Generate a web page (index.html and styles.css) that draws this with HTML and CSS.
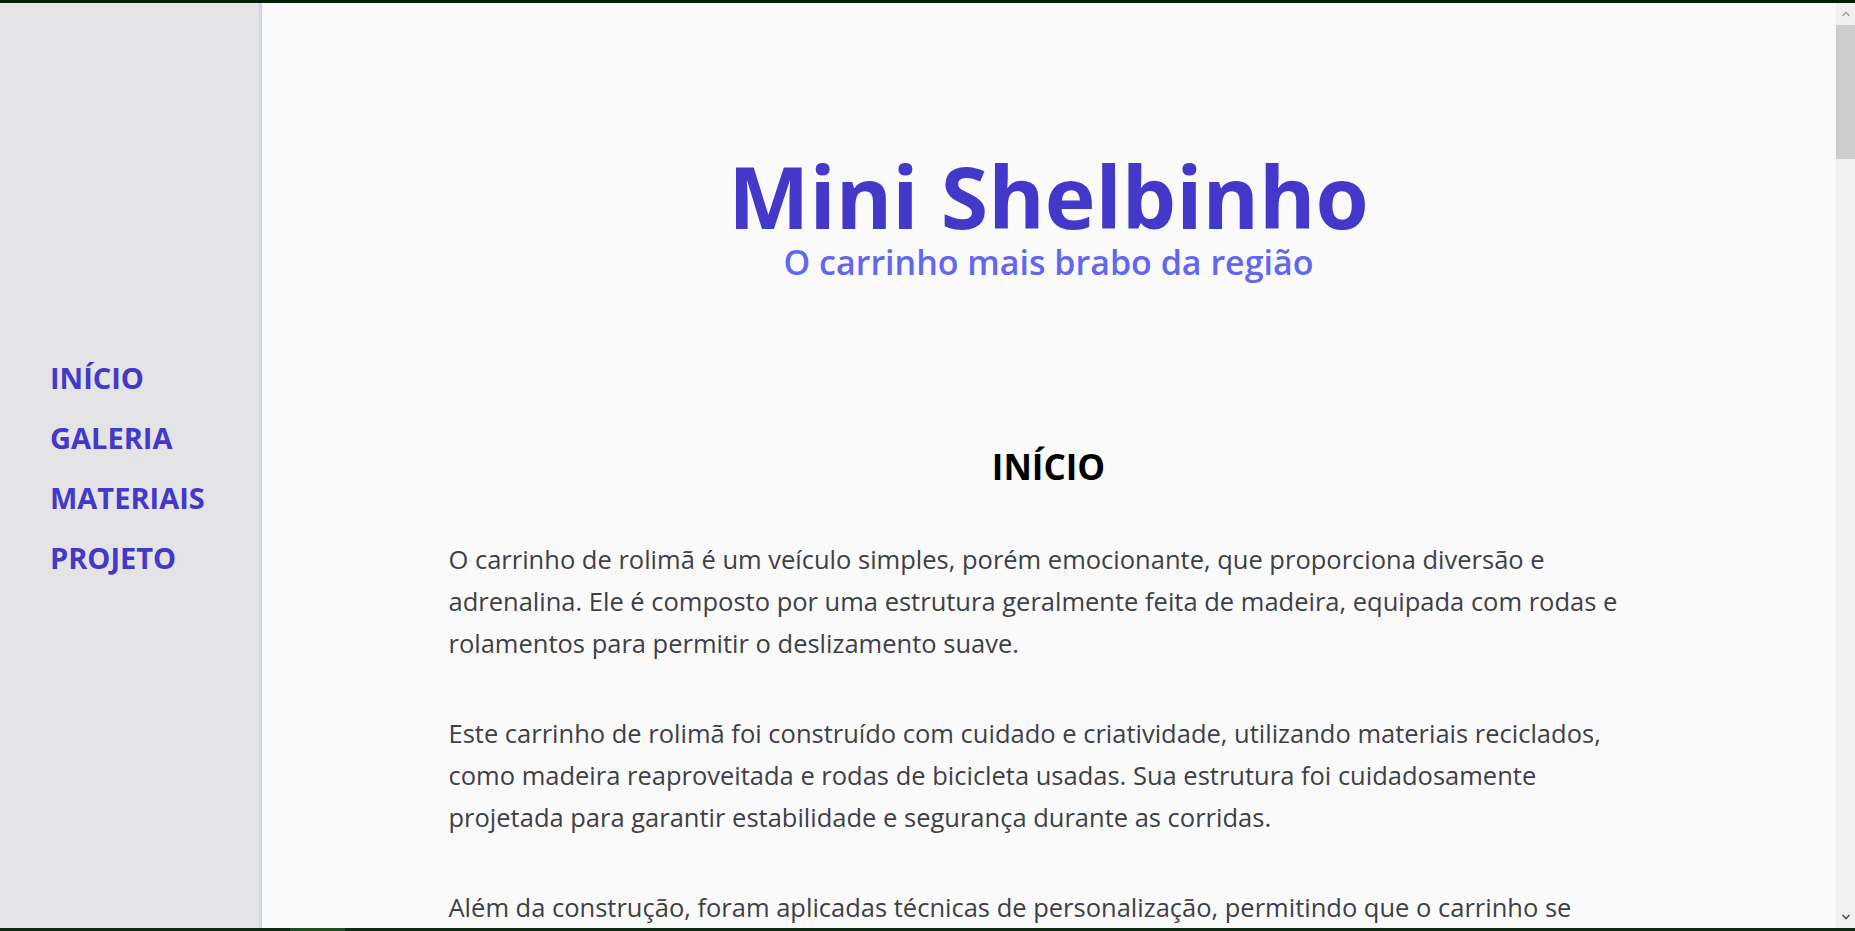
FILE: index.html
```html
<!DOCTYPE html>
<html lang="pt-BR">
<head>
<meta charset="utf-8">
<title>Mini Shelbinho</title>
<link rel="stylesheet" href="styles.css">
</head>
<body>
<div class="topbar"></div>
<div class="app">
  <aside class="sidebar">
    <nav class="nav">
      <a class="nav-link" href="#inicio">INÍCIO</a>
      <a class="nav-link" href="#galeria">GALERIA</a>
      <a class="nav-link" href="#materiais">MATERIAIS</a>
      <a class="nav-link" href="#projeto">PROJETO</a>
    </nav>
  </aside>
  <main class="content">
    <header class="hero">
      <h1 class="hero-title">Mini Shelbinho</h1>
      <p class="hero-subtitle">O carrinho mais brabo da região</p>
    </header>
    <section class="section" id="inicio">
      <h2 class="section-title">INÍCIO</h2>
      <p class="section-text">O carrinho de rolimã é um veículo simples, porém emocionante, que proporciona diversão e adrenalina. Ele é composto por uma estrutura geralmente feita de madeira, equipada com rodas e rolamentos para permitir o deslizamento suave.</p>
      <p class="section-text">Este carrinho de rolimã foi construído com cuidado e criatividade, utilizando materiais reciclados, como madeira reaproveitada e rodas de bicicleta usadas. Sua estrutura foi cuidadosamente projetada para garantir estabilidade e segurança durante as corridas.</p>
      <p class="section-text">Além da construção, foram aplicadas técnicas de personalização, permitindo que o carrinho se destacasse com cores e detalhes únicos, tornando-o ainda mais especial.</p>
    </section>
  </main>
  <div class="scrollbar">
    <div class="sb-btn">
      <svg width="10" height="8" viewBox="0 0 10 8"><path d="M1.5 6 L5 2.5 L8.5 6" fill="none" stroke="#a3a3a3" stroke-width="1.6"/></svg>
    </div>
    <div class="sb-thumb"></div>
    <div class="sb-track"></div>
    <div class="sb-btn">
      <svg width="10" height="8" viewBox="0 0 10 8"><path d="M1.5 2 L5 5.5 L8.5 2" fill="none" stroke="#505050" stroke-width="1.6"/></svg>
    </div>
  </div>
</div>
<div class="bottombar"></div>
</body>
</html>
```
FILE: styles.css
```css
* { box-sizing: border-box; }

html, body {
  margin: 0;
  padding: 0;
}

body {
  width: 1855px;
  height: 931px;
  overflow: hidden;
  display: flex;
  flex-direction: column;
  font-family: "Open Sans", "Noto Sans", "Liberation Sans", sans-serif;
  background: #fafafa;
}

.topbar {
  height: 3px;
  flex: none;
  background: #041f08;
}

.bottombar {
  height: 3px;
  flex: none;
  background: linear-gradient(90deg, #0c2a12 0, #0c2a12 290px, #1f4d22 290px, #1f4d22 345px, #0c2a12 345px);
}

.app {
  flex: 1;
  display: flex;
  min-height: 0;
}

.sidebar {
  width: 262px;
  flex: none;
  background: #e4e4e7;
  border-right: 3px solid #c9d3fb;
  display: flex;
  flex-direction: column;
  justify-content: center;
  padding: 5px 0 0 50px;
}

.nav {
  display: flex;
  flex-direction: column;
  gap: 24px;
}

.nav-link {
  font-size: 29px;
  line-height: 36px;
  font-weight: 700;
  color: #4338ca;
  text-decoration: none;
}

.content {
  flex: 1;
  min-width: 0;
  overflow: hidden;
  background: #fafafa;
}

.hero {
  text-align: center;
  padding-top: 150px;
}

.hero-title {
  margin: 0;
  font-size: 86px;
  line-height: 86px;
  font-weight: 700;
  color: #4338ca;
}

.hero-subtitle {
  margin: 3px 0 0;
  font-size: 34px;
  line-height: 40px;
  font-weight: 600;
  color: #6366f1;
}

.section {
  width: 1200px;
  margin: 165px auto 0;
  padding-right: 16px;
}

.section-title {
  margin: 0 0 51px;
  padding-left: 16px;
  text-align: center;
  font-size: 35px;
  line-height: 40px;
  font-weight: 700;
  color: #000;
}

.section-text {
  margin: 0 0 48px;
  font-size: 25.5px;
  line-height: 42px;
  color: #3f3f46;
}

.scrollbar {
  width: 20px;
  flex: none;
  display: flex;
  flex-direction: column;
  background: #f0f0f0;
  border-left: 1px solid #f7f7f7;
}

.sb-btn {
  height: 22px;
  flex: none;
  display: flex;
  align-items: center;
  justify-content: center;
}

.sb-thumb {
  height: 134px;
  flex: none;
  background: #cdcdcd;
}

.sb-track {
  flex: 1;
}
```
